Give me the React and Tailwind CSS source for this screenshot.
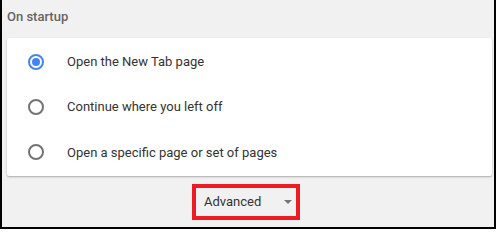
import React, { useState } from 'react';

const OPTIONS = [
  { id: 'ntp', label: 'Open the New Tab page' },
  { id: 'continue', label: 'Continue where you left off' },
  { id: 'specific', label: 'Open a specific page or set of pages' },
];

function Radio({ checked }) {
  return (
    <span
      className={`w-4 h-4 rounded-full border-2 flex items-center justify-center flex-shrink-0 ${
        checked ? 'border-[#4285f4]' : 'border-[#737373]'
      }`}
    >
      {checked && <span className="w-2 h-2 rounded-full bg-[#4285f4]" />}
    </span>
  );
}

export default function App() {
  const [selected, setSelected] = useState('ntp');

  return (
    <div
      className="w-[496px] h-[229px] bg-[#f1f1f1] border-l-2 border-r-2 border-b-2 border-black flex flex-col"
      style={{ fontFamily: 'Roboto, "Liberation Sans", sans-serif' }}
    >
      <div className="h-[38px] pl-[5px] pt-[7px] text-[13px] font-medium text-[#646464]">On startup</div>

      <div className="ml-[5px] mr-[2px] h-[138px] bg-white rounded-[2px] shadow-[0_1px_2px_rgba(0,0,0,0.3)] flex flex-col py-[1px]">
        {OPTIONS.map((o) => (
          <button
            key={o.id}
            type="button"
            onClick={() => setSelected(o.id)}
            className="flex-1 flex items-center pl-[21px] text-left"
          >
            <Radio checked={selected === o.id} />
            <span className="ml-[23px] text-[13px] text-[#333]">{o.label}</span>
          </button>
        ))}
      </div>

      <div className="flex-1 flex items-start pt-[8px] pl-[190px]">
        <button
          type="button"
          className="w-[108px] h-[36px] border-[4px] border-[#ed1c24] flex items-center justify-between pl-[8px] pr-[4px]"
        >
          <span className="text-[13px] text-[#333]">Advanced</span>
          <svg width="8" height="4" viewBox="0 0 8 4">
            <path d="M0 0h8L4 4z" fill="#757575" />
          </svg>
        </button>
      </div>
    </div>
  );
}
